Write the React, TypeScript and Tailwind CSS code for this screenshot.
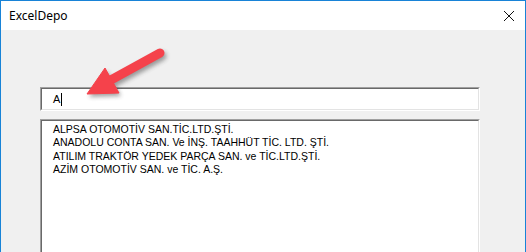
export default function App() {
  const items = [
    'ALPSA OTOMOTİV SAN.TİC.LTD.ŞTİ.',
    'ANADOLU CONTA SAN. Ve İNŞ. TAAHHÜT TİC. LTD. ŞTİ.',
    'ATILIM TRAKTÖR YEDEK PARÇA SAN. ve TİC.LTD.ŞTİ.',
    'AZİM OTOMOTİV SAN. ve TİC. A.Ş.',
  ];

  return (
    <div
      className="relative h-[252px] w-[526px] overflow-hidden border-x border-t border-[#1883d7] bg-[#f0f0f0]"
      style={{ fontFamily: '"Liberation Sans", Arial, sans-serif' }}
    >
      {/* title bar */}
      <div className="flex h-[29px] items-center justify-between bg-white pl-[8px] pr-[8px]">
        <span className="text-[12px] text-black" style={{ fontFamily: '"Noto Sans", sans-serif' }}>
          ExcelDepo
        </span>
        <svg width="12" height="12" viewBox="0 0 12 12" className="mr-[2px]">
          <path d="M1 1 L11 11 M11 1 L1 11" stroke="#111" strokeWidth="1" fill="none" />
        </svg>
      </div>

      {/* body */}
      <div className="flex flex-col gap-[8px] pl-[39px] pt-[57px]">
        <div className="h-[24px] w-[440px] border-l border-t border-b border-r border-l-[#a0a0a0] border-t-[#a0a0a0] border-b-white border-r-white">
          <div className="flex h-full items-center border-l border-t border-b border-r border-l-[#696969] border-t-[#696969] border-b-[#e3e3e3] border-r-[#e3e3e3] bg-white pl-[11px] text-[11px] text-black">
            A<span className="ml-[1px] inline-block h-[13px] w-px bg-black" />
          </div>
        </div>

        <div className="h-[160px] w-[440px] border-l border-t border-b border-r border-l-[#a0a0a0] border-t-[#a0a0a0] border-b-white border-r-white">
          <div className="h-full border-l border-t border-b border-r border-l-[#696969] border-t-[#696969] border-b-[#e3e3e3] border-r-[#e3e3e3] bg-white pl-[11px] pt-[2px] text-[10.5px] leading-[13.3px] text-black">
            {items.map((t) => (
              <div key={t}>{t}</div>
            ))}
          </div>
        </div>
      </div>

      {/* annotation arrow */}
      <svg className="pointer-events-none absolute left-0 top-0" width="526" height="252">
        <defs>
          <filter id="sh" x="-50%" y="-50%" width="200%" height="200%">
            <feGaussianBlur stdDeviation="2" />
          </filter>
        </defs>
        <g transform="translate(2 3)" opacity="0.45" filter="url(#sh)">
          <line x1="159" y1="52" x2="108" y2="80" stroke="#333" strokeWidth="9" strokeLinecap="round" />
          <polygon points="86,93 104,67 118,92" fill="#333" />
        </g>
        <line x1="159" y1="52" x2="108" y2="80" stroke="#f5424b" strokeWidth="9" strokeLinecap="round" />
        <polygon points="86,93 104,67 118,92" fill="#f5424b" strokeLinejoin="round" stroke="#f5424b" strokeWidth="1" />
      </svg>
    </div>
  );
}
